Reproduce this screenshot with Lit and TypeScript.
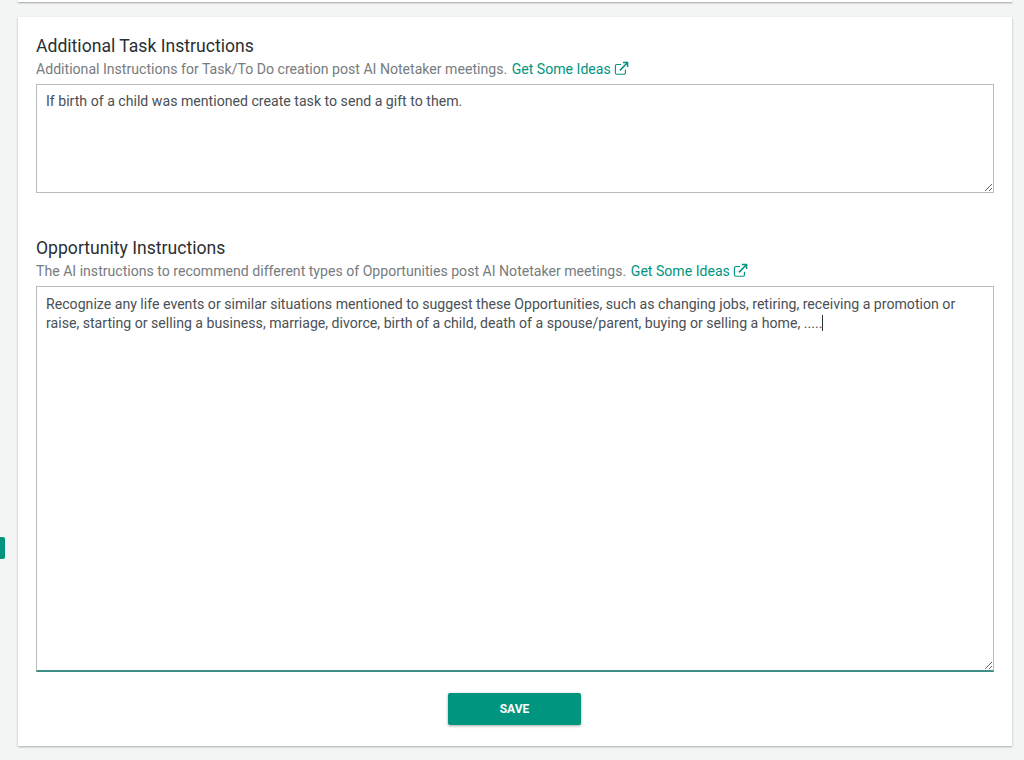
import { LitElement, html, css } from "lit";
import { customElement } from "lit/decorators.js";

const extIcon = html`<svg class="ext" viewBox="0 0 16 16" width="15" height="15" fill="none" stroke="currentColor" stroke-width="1.2" aria-hidden="true">
  <path d="M12.2 9.2v3.3a1.6 1.6 0 0 1-1.6 1.6H3.1a1.6 1.6 0 0 1-1.6-1.6V5.3a1.6 1.6 0 0 1 1.6-1.6h4.4"/>
  <path d="M6.3 10 14 2.2M9.6 1.6h4.9v4.9" stroke-width="1.6"/>
</svg>`;

@customElement("app-root")
export class AppRoot extends LitElement {
  static styles = css`
    :host {
      display: block;
      position: relative;
      height: 760px;
      overflow: hidden;
      background: #f3f5f4;
      font-family: Roboto, "Liberation Sans", sans-serif;
      color: #4a5055;
      --teal: #00957f;
    }
    .page { padding: 0 12px 0 18px; }
    .sliver {
      height: 2px;
      background: #fff;
      box-shadow: 0 1px 2px rgba(0, 0, 0, 0.35);
      margin-bottom: 15px;
    }
    .card {
      height: 729px;
      box-sizing: border-box;
      background: #fff;
      box-shadow: 0 1px 2px rgba(0, 0, 0, 0.3);
      padding: 19px 18px 0;
      display: flex;
      flex-direction: column;
    }
    h2 {
      margin: 0;
      font-size: 17.6px;
      line-height: 21px;
      font-weight: 400;
      color: #2a2f33;
    }
    .sub {
      margin: 4px 0 0;
      font-size: 14.1px;
      line-height: 17px;
      color: #777c80;
      display: flex;
      align-items: center;
      white-space: pre;
    }
    .sub a { color: var(--teal); text-decoration: none; margin-left: 1px; }
    .ext { color: var(--teal); margin-left: 3px; margin-top: -3px; }
    .area {
      box-sizing: border-box;
      margin-top: 6px;
      border: 1px solid #bcbcbc;
      padding: 7px 9px;
      font-size: 14.14px;
      line-height: 19px;
      overflow: auto;
      resize: vertical;
      background: #fff;
    }
    .area.a1 { height: 109px; margin-bottom: 45px; }
    .area.a2 { height: 386px; padding-top: 8px; border-bottom: 2px solid #3f8f86; }
    .caret { border-right: 1px solid #2a2f33; }
    .actions { display: flex; justify-content: center; margin-top: 21px; padding-right: 1px; }
    button {
      width: 133px;
      height: 32px;
      border: 0;
      border-radius: 2px;
      background: var(--teal);
      color: #fff;
      font: 700 12px Roboto, "Liberation Sans", sans-serif;
      box-shadow: 0 1px 3px rgba(0, 0, 0, 0.35);
    }
    .tab {
      position: absolute;
      left: 0;
      top: 537px;
      width: 5px;
      height: 22px;
      background: var(--teal);
      border-radius: 0 2px 2px 0;
    }
  `;

  render() {
    return html`
      <div class="tab"></div>
      <div class="page">
        <div class="sliver"></div>
        <section class="card">
          <h2>Additional Task Instructions</h2>
          <p class="sub">Additional Instructions for Task/To Do creation post AI Notetaker meetings. <a href="#">Get Some Ideas</a>${extIcon}</p>
          <div class="area a1">If birth of a child was mentioned create task to send a gift to them.</div>
          <h2>Opportunity Instructions</h2>
          <p class="sub">The AI instructions to recommend different types of Opportunities post AI Notetaker meetings. <a href="#">Get Some Ideas</a>${extIcon}</p>
          <div class="area a2">Recognize any life events or similar situations mentioned to suggest these Opportunities, such as changing jobs, retiring, receiving a promotion or raise, starting or selling a business, marriage, divorce, birth of a child, death of a spouse/parent, buying or selling a home, .....<span class="caret"></span></div>
          <div class="actions"><button>SAVE</button></div>
        </section>
      </div>
    `;
  }
}
